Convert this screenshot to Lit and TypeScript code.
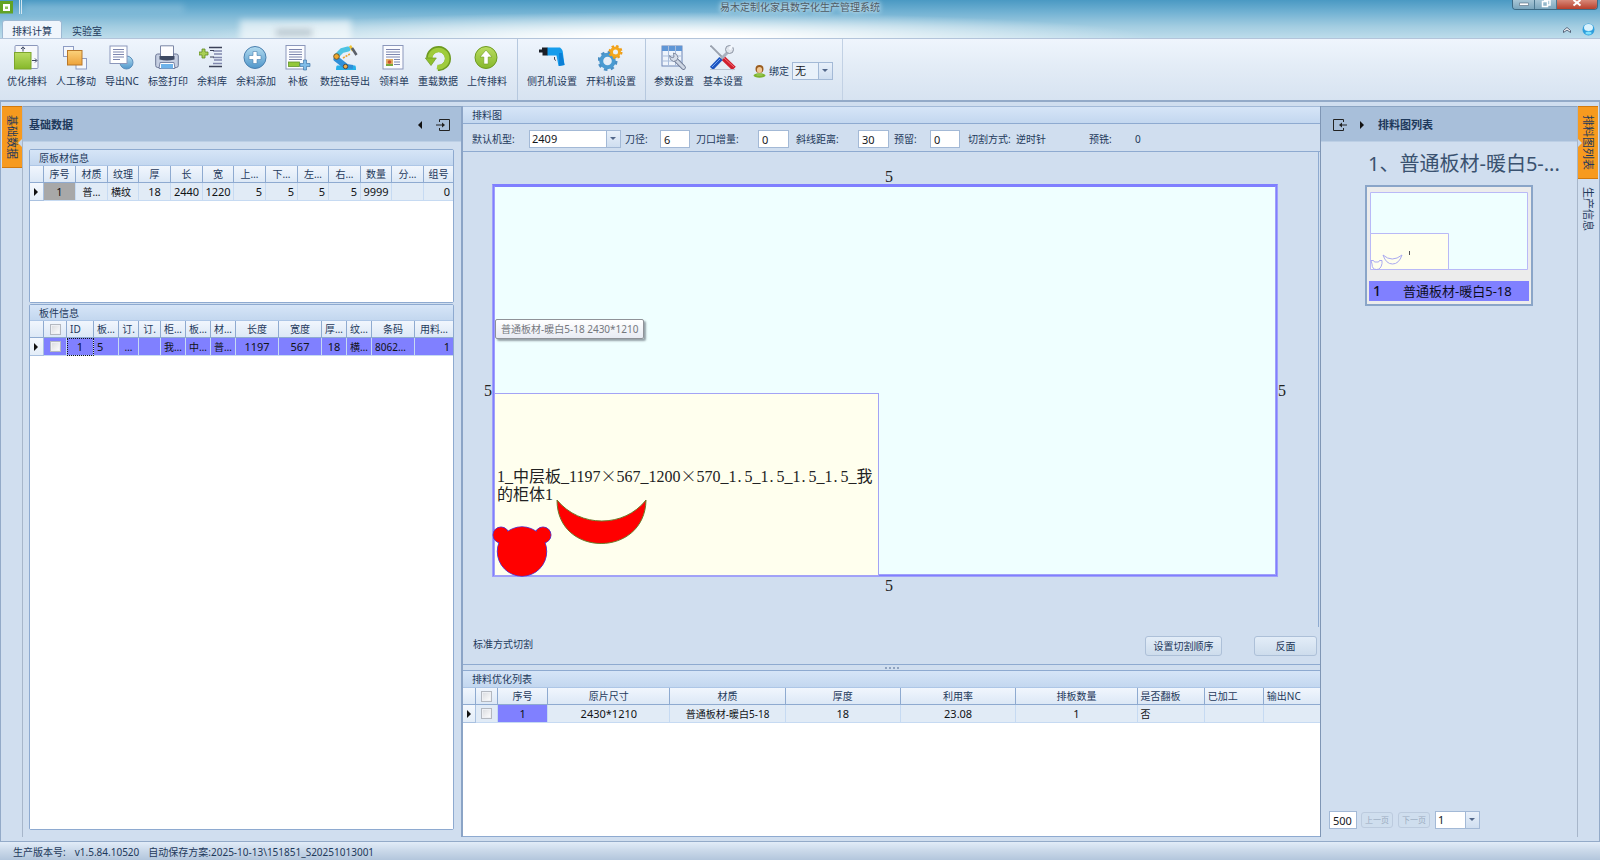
import { LitElement, html, css, svg, nothing } from "lit";
import { customElement, property } from "lit/decorators.js";
import { classMap } from "lit/directives/class-map.js";

const icons: Record<string, unknown> = {
  nest: svg`<rect x="1" y=".5" width="23" height="23" rx="1" fill="#f6f8fc" stroke="#8b97bb"/>
    <rect x=".5" y="7.500" width="16.500" height="16.500" fill="url(#gGreen)" stroke="#7da52c"/>
    <path d="M9 6.500V2.500M7 4L9 1.800 11 4M18 15.500h4.500M21 13.500l2 2-2 2" stroke="#3b4560" fill="none"/>`,
  move: svg`<rect x=".5" y="1.500" width="10" height="10" fill="#f4f7fc" stroke="#8d9cc4"/>
    <rect x="13" y="13.500" width="10.500" height="10.500" fill="#f4f7fc" stroke="#8d9cc4"/>
    <rect x="4.500" y="5.500" width="14.500" height="14.500" fill="url(#gOrange)" stroke="#b8782a"/>`,
  export: svg`<circle cx="17.500" cy="17.500" r="6.500" fill="url(#gBlue)" stroke="#5c8fbc"/>
    <rect x="1" y="1" width="17" height="17.500" fill="#fff" stroke="#8b97bb"/>
    <path d="M4 4.500h11M4 7h11M4 9.500h11M4 12h11M4 14.500h7" stroke="#7d86ae"/>`,
  print: svg`<path d="M5.500 12V.800h13V12z" fill="#fdfdff" stroke="#7b86a6"/>
    <path d="M.700 11q0-2 2-2h2.800v3.500h13V9h2.800q2 0 2 2v9.500q0 2-2 2H2.700q-2 0-2-2z" fill="#c6cfe2" stroke="#6c7796"/>
    <path d="M4.500 11h15v3.500q-7.500 1.800-15 0z" fill="#3f4a63"/>
    <path d="M5 17.500h14l1 6H4z" fill="#fff" stroke="#7b86a6"/><path d="M6 19h12v4.500H6z" fill="#6fb3ea"/>`,
  stock: svg`<path d="M10 2.500h13M10 21.500h13" stroke="#3c4258" stroke-width="1.400"/><path d="M14 6h9M15 9h8M14 12.500h9M15 15h8M14 18.500h9" stroke="#8087ad" stroke-width="1.500"/>
    <path d="M3 4h3v3h3v3H6v3H3v-3H0V7h3z" fill="#a9cf55" stroke="#5f8c22" stroke-width=".8"/>
    <path d="M11 5.500h4M11 12h4" stroke="#3c4258"/>`,
  add: svg`<circle cx="12" cy="12.500" r="11" fill="url(#gBlue)" stroke="#4a7fae"/>
    <path d="M10 6.500h4v4h4v4h-4v4h-4v-4H6v-4h4z" fill="#fff" stroke="#4a7fae" stroke-width=".6"/>`,
  patch: svg`<rect x="1" y=".500" width="19" height="23.500" fill="#fbfcff" stroke="#8b97bb"/>
    <path d="M4 4.500h13M4 7h13M4 9.500h13M4 12h13M4 14.500h13" stroke="#7d86ae"/>
    <rect x="3.500" y="17" width="11" height="4.500" fill="#93c83a" stroke="#5f942a" stroke-width=".8"/>
    <path d="M18.500 15h3v3.500H25v3h-3.500V25h-3v-3.500H15v-3h3.500z" fill="#7fbce8" stroke="#4277a9" stroke-width=".7"/>`,
  robot: svg`<path d="M5 20.500h18q1 0 1 4.500H4q0-4 1-4.500z" fill="#27b0ea"/>
    <path d="M4.500 14L14 21.500" stroke="#2f8fd8" stroke-width="6" stroke-linecap="round"/>
    <path d="M4.500 11L10 5.500 16 4" stroke="#4cc3e2" stroke-width="5" stroke-linecap="round" fill="none"/>
    <path d="M14 21l7 1" stroke="#2f8fd8" stroke-width="4"/>
    <circle cx="4.500" cy="11.500" r="2.800" fill="#f0a72c" stroke="#6e5a33"/><circle cx="13.500" cy="21.500" r="2.200" fill="#f0b046" stroke="#4f4a40"/>
    <path d="M11 13l7-4" stroke="#e9a433" stroke-width="1.600" stroke-dasharray="2 1"/>
    <path d="M17 1.500l2-1.500 3 5-2 1.500z" fill="#f1c232"/><path d="M20 3l4.500 7" stroke="#5b6069" stroke-width="2.600"/>`,
  bill: svg`<rect x="2" y=".500" width="20" height="23.500" fill="#fbfcff" stroke="#8b97bb"/>
    <path d="M5 4.500h14M5 7h14M5 9.500h14M5 12h14M13 14.500h6M13 17h6M13 19.500h6" stroke="#7d86ae"/>
    <rect x="5" y="14" width="7" height="7" fill="#e3ad62"/><circle cx="8.500" cy="17" r="1.800" fill="#c8512c"/><path d="M5 19h7v2H5z" fill="#7aa93c"/>`,
  reload: svg`<path d="M4 13A9.500 9.500 0 1 1 13 23" fill="none" stroke="#6d9a20" stroke-width="6"/>
    <path d="M5 14A8.600 8.600 0 1 1 12 22" fill="none" stroke="#9fcc3c" stroke-width="4.600"/>
    <path d="M.300 13h11L6 20.500z" fill="#8fc02e" stroke="#6d9a20" stroke-width=".7"/>`,
  upload: svg`<circle cx="12" cy="12.500" r="11" fill="url(#gGreen)" stroke="#6d9a20"/>
    <path d="M12 5l6 7h-3.800v7H9.800v-7H6z" fill="#fff" stroke="#6d9a20" stroke-width=".6"/>`,
  drill: svg`<path d="M8 2.500h13q3 2 3 6l1.500 11.500-6 1-2-10.500H8z" fill="#159cec"/><path d="M20 8l3 0 2.500 12-5.500 1z" fill="#0b7fd6"/>
    <path d="M0 4.500h3v-2h5.500v8H3.500v-3H0z" fill="#1b1f27"/><path d="M15.500 12v2.500l1.500 1" stroke="#445" fill="none"/>`,
  gears: svg`<circle cx="9.500" cy="16" r="6.300" fill="none" stroke="#4a9bd2" stroke-width="4"/>
    <circle cx="9.500" cy="16" r="8.800" fill="none" stroke="#4a8fc4" stroke-width="2.400" stroke-dasharray="3.500 3.410"/>
    <circle cx="17.500" cy="7" r="4" fill="none" stroke="#f5a81c" stroke-width="3"/>
    <circle cx="17.500" cy="7" r="6" fill="none" stroke="#ef9d16" stroke-width="2" stroke-dasharray="2.400 2.310"/>`,
  params: svg`<rect x="1" y="1" width="20" height="20" fill="#eef4fc" stroke="#6f86b5"/>
    <path d="M1 1h20v5H1z" fill="#5f96d6"/><path d="M1 11h20M1 16h20M7.500 1v20M14.500 1v20" stroke="#a9bddb"/>
    <path d="M14 14l8.500 8.500" stroke="#6d7891" stroke-width="4.600" stroke-linecap="round"/>
    <path d="M14 14l8.500 8.500" stroke="#cdd6e4" stroke-width="3" stroke-linecap="round"/>
    <path d="M8.500 10.500q0 5 4 6 4 0 4.500-4-.500-4-4.500-4.500l.500 4-2 .800z" fill="#d6deea" stroke="#6d7891" stroke-width=".8"/>`,
  tools: svg`<path d="M.500 .500L13 13" stroke="#9aa1ae" stroke-width="1.800"/><path d="M12 12l12 11.500" stroke="#d01f2d" stroke-width="5"/><path d="M14 13l10 9" stroke="#f2717a" stroke-width="1"/>
    <path d="M19 6L10 15" stroke="#aab2c0" stroke-width="3"/><path d="M11 13.500L1.500 23.500" stroke="#1d55c0" stroke-width="4.600"/><path d="M10 14L2 22" stroke="#6ea0f0" stroke-width="1"/>
    <circle cx="19.500" cy="4.500" r="4" fill="#dfe4ec" stroke="#8b93a2"/><path d="M19.500 4.500l3-4.500" stroke="#f3f7fd" stroke-width="2.500"/><path d="M0 24.500h25" stroke="#b9c4d3"/>`,
};

interface Tool { icon: string; label: string }
const groups: Tool[][] = [
  [
    { icon: "nest", label: "优化排料" }, { icon: "move", label: "人工移动" }, { icon: "export", label: "导出NC" },
    { icon: "print", label: "标签打印" }, { icon: "stock", label: "余料库" }, { icon: "add", label: "余料添加" },
    { icon: "patch", label: "补板" }, { icon: "robot", label: "数控钻导出" }, { icon: "bill", label: "领料单" },
    { icon: "reload", label: "重载数据" }, { icon: "upload", label: "上传排料" },
  ],
  [{ icon: "drill", label: "侧孔机设置" }, { icon: "gears", label: "开料机设置" }],
  [{ icon: "params", label: "参数设置" }, { icon: "tools", label: "基本设置" }],
];

interface Column {
  title: string;
  w: number;
  value?: string;
  align?: "l" | "c" | "r";
  headLeft?: boolean;
  kind?: "mark" | "check" | "grey" | "blue" | "focus";
}

const sheetColumns: Column[] = [
  { title: "", w: 14, kind: "mark" },
  { title: "序号", w: 32, value: "1", kind: "grey" }, { title: "材质", w: 32, value: "普…" },
  { title: "纹理", w: 31, value: "横纹", align: "l" }, { title: "厚", w: 32, value: "18" },
  { title: "长", w: 32, value: "2440" }, { title: "宽", w: 31, value: "1220" },
  { title: "上…", w: 32, value: "5", align: "r" }, { title: "下…", w: 32, value: "5", align: "r" },
  { title: "左…", w: 31, value: "5", align: "r" }, { title: "右…", w: 32, value: "5", align: "r" },
  { title: "数量", w: 31, value: "9999" }, { title: "分…", w: 32, value: "" },
  { title: "组号", w: 29, value: "0", align: "r" },
];
const partColumns: Column[] = [
  { title: "", w: 14, kind: "mark" }, { title: "", w: 23, kind: "check" },
  { title: "ID", w: 27, value: "1", kind: "focus", headLeft: true },
  { title: "板…", w: 25, value: "5", align: "l" }, { title: "订.", w: 20, value: "…" }, { title: "订.", w: 22, value: "" },
  { title: "柜…", w: 25, value: "我…" }, { title: "板…", w: 25, value: "中…" }, { title: "材…", w: 25, value: "普…" },
  { title: "长度", w: 43, value: "1197" }, { title: "宽度", w: 43, value: "567" }, { title: "厚…", w: 25, value: "18" },
  { title: "纹…", w: 25, value: "横…" }, { title: "条码", w: 43, value: "8062…", align: "l" },
  { title: "用料…", w: 38, value: "1", align: "r" },
];
const resultColumns: Column[] = [
  { title: "", w: 13, kind: "mark" }, { title: "", w: 22, kind: "check" },
  { title: "序号", w: 50, value: "1", kind: "blue" }, { title: "原片尺寸", w: 122, value: "2430*1210" },
  { title: "材质", w: 115, value: "普通板材-暖白5-18" }, { title: "厚度", w: 115, value: "18" },
  { title: "利用率", w: 115, value: "23.08" }, { title: "排板数量", w: 121, value: "1" },
  { title: "是否翻板", w: 67, value: "否", align: "l", headLeft: true },
  { title: "已加工", w: 59, value: "", headLeft: true }, { title: "输出NC", w: 56, value: "", headLeft: true },
];

@customElement("data-grid")
export class DataGrid extends LitElement {
  @property({ attribute: false }) columns: Column[] = [];
  @property({ type: Boolean }) selected = false;
  @property() name = "";

  static styles = css`
    :host { display: block; flex: 1; background: #fff; min-height: 0; overflow: hidden; }
    table { width: 100%; table-layout: fixed; border-collapse: separate; border-spacing: 0; font-size: 10px; line-height: 16px; }
    th, td { box-sizing: border-box; height: 18px; padding: 0 3px; overflow: hidden; white-space: nowrap; text-align: center; font-weight: 400; }
    th, td.c { padding: 0 1px; }
    th.l { padding: 0 3px; }
    th { color: #1e395b; height: 17px; background: linear-gradient(#f1f6fd, #dce8f6); border-right: 1px solid #8eaad0; border-bottom: 1px solid #8eaad0; }
    td { color: #101215; background: #e1ebf6; border-right: 1px solid #c6daf2; border-bottom: 1px solid #c6daf2; }
    th:last-child, td:last-child { border-right: 0; }
    .num { font-size: 11px; }
    .l { text-align: left; }
    .r { text-align: right; }
    .mark { background: linear-gradient(#f4f8fd, #e3edf8); border-color: #a9c1e0; }
    .mark svg { display: block; margin: auto; }
    .grey { background: #a8a8a8; }
    .sel td:not(.mark), .blue { background: #8080ff; }
    .focus { outline: 1px dotted #16181c; outline-offset: -1px; }
    input { appearance: none; display: block; box-sizing: border-box; width: 11px; height: 11px; margin: 0 auto; border: 1px solid #b3b8c0; background: linear-gradient(135deg, #d8dade, #fff); outline: 1px solid #eef0f4; outline-offset: -2px; }
  `;

  private check(label: string) {
    return html`<input type="checkbox" aria-label=${label} />`;
  }

  render() {
    const total = this.columns.reduce((sum, c) => sum + c.w, 0);
    return html`<table aria-label=${this.name}>
      <colgroup>${this.columns.map((c) => html`<col style="width:${(c.w / total) * 100}%" />`)}</colgroup>
      <thead><tr>${this.columns.map((c) => html`<th class=${classMap({ l: !!c.headLeft })}>${
        c.kind === "check" ? this.check("全选") : c.title}</th>`)}</tr></thead>
      <tbody><tr class=${this.selected ? "sel" : ""}>${this.columns.map((c) => html`<td class=${classMap({
        [c.align ?? "c"]: true, [c.kind ?? "plain"]: true, num: /^[\d.*]+$/.test(c.value ?? ""),
      })}>${c.kind === "mark"
        ? html`<svg width="5" height="8"><path d="M0 0l4 4-4 4z" fill="#111"/></svg>`
        : c.kind === "check" ? this.check("选择") : c.value ?? nothing}</td>`)}</tr></tbody>
    </table>`;
  }
}

@customElement("app-root")
export class AppRoot extends LitElement {
  static styles = css`
    :host {
      display: grid; grid-template-rows: 38px 63px 1fr 19px; height: 100vh; overflow: hidden;
      font: 10px/14px "Noto Sans", "Noto Sans CJK SC", sans-serif; color: #1e395b; background: #d0deef;
    }
    * { box-sizing: border-box; }
    button, input, select { font: inherit; color: inherit; margin: 0; }
    button { border: 0; background: none; padding: 0; }
    .defs { position: absolute; width: 0; height: 0; }

    .title {
      display: grid; grid-template: 15px 1fr / 1fr auto 1fr; position: relative; overflow: hidden;
      background:
        radial-gradient(ellipse 480px 26px at 42% 100%, #fff 15%, rgba(255, 255, 255, 0) 100%),
        linear-gradient(#4a99c3, #6fb0d2 30%, #a3cde1 70%, #bddceb);
    }
    .ghost { position: absolute; filter: blur(3px); background: rgba(255, 255, 255, .4); }
    .g1 { left: 24px; top: 4px; width: 160px; height: 8px; opacity: .4; }
    .g2 { left: 240px; top: 20px; width: 111px; height: 22px; background: rgba(255, 255, 255, .6); }
    .g3 { left: 276px; top: 29px; width: 36px; height: 7px; background: #b9c7cf; }
    .brand { display: flex; align-items: flex-start; gap: 5px; }
    .brand svg { display: block; }
    .brand i { width: 3px; height: 14px; border: solid #d3e6f0; border-width: 0 1px; }
    h1 { margin: 0; font: inherit; line-height: 14px; color: #4e5a64; text-shadow: 0 0 4px #e8f3f8, 0 0 6px #e8f3f8; }
    .win { display: flex; justify-self: end; height: 10px; margin-right: 2px; border: 1px solid #3e6a84; border-top: 0; border-radius: 0 0 4px 4px; overflow: hidden; }
    .win button { width: 22px; display: grid; place-items: center; background: linear-gradient(#a8c6d6, #7ba6bd); border-right: 1px solid #4c7890; }
    .win .close { width: 40px; background: linear-gradient(#d88878, #b8402c); border-right: 0; }
    .tabs { grid-column: 1 / 3; display: flex; align-items: flex-end; padding-left: 2px; }
    .tabs button { height: 18px; padding: 3px 10px 0; }
    .tabs .on { padding: 2px 9px 0; border-radius: 3px 3px 0 0; border: 1px solid #9db9d3; border-bottom: 0; background: #f0f5fc; }
    .corner { display: flex; align-items: center; justify-content: flex-end; gap: 10px; padding: 6px 5px 0 0; }
    .corner button, .corner svg { display: block; }

    .ribbon { display: flex; border-top: 1px solid #b3c4da; border-bottom: 1px solid #93aac8; background: linear-gradient(#eff5fd, #e3ecf6 45%, #d7e3f1); }
    .tools { display: flex; align-items: flex-start; gap: 9px; padding: 6px 9px 0; border-right: 1px solid #b6c8de; }
    .tools.first { padding: 6px 10px 0 7px; }
    .tools.end { border: 0; padding: 6px 0 0 8px; }
    .tool { display: flex; flex-direction: column; align-items: center; gap: 3px; min-width: 26px; height: 50px; white-space: nowrap; }
    .tool svg { width: 26px; height: 26px; display: block; }
    .bind { display: flex; align-items: center; gap: 3px; padding: 2px 9px 0 10px; border-right: 1px solid #c2d1e4; }

    .combo { position: relative; display: block; height: 18px; }
    .combo select { appearance: none; width: 100%; height: 100%; padding: 0 2px; border: 1px solid #a3b9d6; border-radius: 0; background: #fff; color: #16181c; font-size: 11px; }
    .combo::before { content: ""; position: absolute; right: 1px; top: 1px; bottom: 1px; width: 13px; border-left: 1px solid #a3b9d6; background: linear-gradient(#e8f0fa, #cfdef0); pointer-events: none; }
    .combo::after { content: ""; position: absolute; right: 5px; top: 7px; border: 3px solid transparent; border-top-color: #52678a; border-bottom: 0; pointer-events: none; }
    .w41 { width: 41px; } .w45 { width: 45px; }
    .bind select { background: #e9f1fa; }
    .text { height: 18px; min-width: 0; padding: 0 3px; border: 1px solid #a3b9d6; background: #fff; color: #16181c; font-size: 11px; }

    .work { display: grid; grid-template-columns: 22px 438px 1fr 256px 22px; border: 1px solid #93aac8; border-width: 1px 1px 0; min-height: 0; padding-top: 4px; }
    .rail { padding-left: 1px; min-width: 0; border-right: 1px solid #a7b6ca; margin-bottom: 4px; }
    .rail.right { border: 0; border-left: 1px solid #a7b6ca; padding: 0 1px 0 0; }
    .rail button { display: flex; align-items: center; justify-content: flex-start; writing-mode: vertical-rl; text-orientation: sideways; width: 20px; padding: 8px 0; font-size: 11px; line-height: 20px; }
    .rail .on { position: relative; background: #f79a1e; border: solid #d2790c; border-width: 1px 0; }
    .rail .on::after { content: ""; position: absolute; top: 32px; right: 0; border: 4px solid transparent; border-right-color: #c5d6ea; border-left: 0; }
    .rail.right .on::after { right: auto; left: 0; border: 4px solid transparent; border-left-color: #c5d6ea; border-right: 0; }

    .panel { display: flex; flex-direction: column; min-width: 0; min-height: 0; }
    .phead { display: flex; align-items: center; gap: 13px; height: 36px; padding: 1px 11px 0 6px; background: #a8bfda; border-bottom: 1px solid #bccfe5; border-top: 1px solid #8ba4c2; }
    .phead h2 { margin: 0; font-size: 11px; font-weight: 700; line-height: 16px; }
    .phead .grow { flex: 1; }
    .phead svg { display: block; }
    .boxes { flex: 1; display: flex; flex-direction: column; gap: 1px; padding: 7px 7px 11px 6px; min-height: 0; }
    .box { display: flex; flex-direction: column; border: 1px solid #8eaad0; border-radius: 2px; min-height: 0; }
    .b1 { flex: 153 0 0; } .b2 { flex: 527 0 0; }
    .cap { margin: 0; height: 17px; padding-left: 9px; font: inherit; line-height: 17px; background: linear-gradient(#d6e5f7, #c3d7ef); border-bottom: 1px solid #adc6e6; }
    .box .cap { height: 16px; }

    .center { border-left: 2px solid #8ba4c6; border-right: 1px solid #7f96b5; margin-bottom: 4px; }
    .center > .cap { height: 18px; border-top: 1px solid #a3bad8; border-bottom-color: #8eaad0; }
    .params { display: grid; grid-template-columns: 57px 92px 4px 35px 30px 6px 62px 31px 7px 62px 31px 5px 36px 30px 8px 48px 73px 46px 20px; align-items: center; height: 28px; padding: 3px 0 0 9px; border-bottom: 1px solid #8eaad0; }
    .params label { white-space: nowrap; }
    .sheet { flex: 1; display: grid; grid-template: 16px 1fr 16px / 29px 1fr 40px; padding: 16px 0 34px; margin-right: 1px; border-right: 1px solid #8eaad0; min-height: 0; font: 16px/16px "Liberation Serif", "Noto Sans CJK SC", serif; color: #222; }
    .dim { place-self: center; }
    .n { grid-area: 1 / 2; padding: 2px 0 0 8px; line-height: 14px; } .s { grid-area: 3 / 2; padding: 2px 0 0 8px; }
    .w { grid-area: 2 / 1; justify-self: end; padding-top: 20px; } .e { grid-area: 2 / 3; justify-self: start; padding-top: 20px; }
    .board { grid-area: 2 / 2; position: relative; background: #efffff; border: 3px solid #a0a0fa; border-top: 3px double #7f7fff; outline: 1px solid #7f7fff; outline-offset: -2px; }
    .part { position: absolute; left: -1px; bottom: -2px; width: 49.3%; height: 47.4%; background: #ffffee; border: 1px solid #a3a3f5; }
    .part p { position: absolute; top: 40%; left: 2px; margin: 0; font-size: 16px; line-height: 18px; white-space: nowrap; }
    .pt { display: inline-block; width: 8px; padding-left: 1px; }
    .x { font-family: "Noto Sans CJK SC"; font-weight: 300; display: inline-block; width: 16px; text-align: center; }
    .cuts { position: absolute; left: -3px; bottom: -2px; width: 156px; height: 80px; overflow: visible; }
    .tip { position: absolute; left: 0; top: 34%; padding: 1px 5px; border: 1px solid #8f9298; border-radius: 2px; background: linear-gradient(#fff, #e8ebf3); box-shadow: 2px 2px 2px rgba(90, 100, 110, .6); color: #75787e; font: 10px/16px "Noto Sans", "Noto Sans CJK SC", sans-serif; }
    .actions { display: flex; align-items: center; height: 38px; padding: 1px 3px 0 10px; border-bottom: 1px solid #8eaad0; }
    .actions span { flex: 1; padding-bottom: 5px; }
    .btn { height: 20px; border: 1px solid #adc0d8; border-radius: 3px; background: linear-gradient(#e3edf8, #cddcec); }
    .b77 { width: 77px; margin-right: 32px; } .b63 { width: 63px; }
    .grip { display: flex; gap: 2px; justify-content: center; align-items: center; height: 5px; }
    .grip i { width: 2px; height: 2px; background: #8fa3c0; }
    .results { height: 167px; display: flex; flex-direction: column; border-top: 1px solid #8eaad0; border-bottom: 1px solid #8eaad0; }

    .side .phead { padding-left: 12px; }
    .body { flex: 1; display: flex; flex-direction: column; align-items: flex-start; padding: 6px 0 12px 8px; }
    .body h3 { margin: 0 0 5px 39px; font-size: 20px; line-height: 32px; font-weight: 400; color: #3a5270; white-space: nowrap; }
    .card { width: 168px; margin-left: 36px; padding: 4px 2px 3px; border: 2px solid #8aa5c8; background: #ececec; display: grid; gap: 10px; }
    .card svg { display: block; width: 160px; height: 80px; }
    .card div { display: flex; gap: 22px; padding: 0 4px; background: #8080ff; color: #0d0d1d; font-size: 13px; line-height: 20px; white-space: nowrap; }
    .card b { font-weight: 500; font-size: 14px; }
    .pager { display: flex; align-items: center; margin-top: auto; gap: 4px; }
    .pager .btn { width: 32px; height: 16px; font-size: 8px; line-height: 12px; color: #9aabbf; border-color: #bccbde; background: #cfdeee; margin-right: 1px; }
    .pager .text { width: 28px; }

    .status { display: flex; gap: 9px; align-items: center; padding: 2px 0 0 13px; border-top: 1px solid #93aac8; background: linear-gradient(#e2ecf8, #c9d8e9 50%, #b3c6dc); white-space: nowrap; }
  `;

  private field(id: string, label: string, value: string) {
    return html`<label for=${id}>${label}</label><input class="text" id=${id} .value=${value} />`;
  }

  private tool(t: Tool) {
    return html`<button class="tool"><svg viewBox="0 0 26 26">${icons[t.icon]}</svg>${t.label}</button>`;
  }

  render() {
    const pt = html`<span class="pt">.</span>`;
    const x = html`<span class="x">×</span>`;
    const edge = html`1${pt}5_`;
    return html`
      <header class="title">
        <div class="ghost g1"></div><div class="ghost g2"></div><div class="ghost g3"></div>
        <div class="brand"><svg width="14" height="14"><path d="M0 1h13v12.500H0z" fill="#62a324"/><path d="M3 4h7v7H3z" fill="#fff"/><path d="M5 6.500h3v2.500H5z" fill="#8fc45c"/></svg><i></i></div>
        <h1>易木定制化家具数字化生产管理系统</h1>
        <div class="win">
          <button aria-label="最小化"><svg width="10" height="9"><path d="M.500 3h9v2.500h-9z" fill="#fff" stroke="#50677a" stroke-width=".6"/></svg></button>
          <button aria-label="还原"><svg width="10" height="9"><path d="M3 0h6v5H7M1.500 1.500h5v5h-5z" fill="none" stroke="#fff" stroke-width="1.500"/></svg></button>
          <button class="close" aria-label="关闭"><svg width="10" height="9"><path d="M1.500 0l7 5.500M8.500 0l-7 5.500" stroke="#fff" stroke-width="2"/></svg></button>
        </div>
        <nav class="tabs"><button class="on">排料计算</button><button>实验室</button></nav>
        <div class="corner">
          <button aria-label="折叠功能区"><svg width="10" height="8"><path d="M1.500 4.500L5 1.500l3.500 3v2L5 4 1.500 6.500z" fill="#fff" stroke="#46536b" stroke-width=".9"/></svg></button>
          <button aria-label="帮助"><svg width="13" height="13"><circle cx="6.500" cy="6.500" r="6" fill="#2f9fdd"/><ellipse cx="6.500" cy="4.500" rx="4.500" ry="3.500" fill="#d9f2fd"/><ellipse cx="6.500" cy="10" rx="3" ry="1.500" fill="#7fe0fb"/></svg></button>
        </div>
      </header>

      <section class="ribbon">
        <svg class="defs"><defs>
          <linearGradient id="gGreen" x2="0" y2="1"><stop stop-color="#b9dc62"/><stop offset="1" stop-color="#86b82a"/></linearGradient>
          <linearGradient id="gOrange" x2="0" y2="1"><stop stop-color="#fbd27c"/><stop offset="1" stop-color="#eda23a"/></linearGradient>
          <linearGradient id="gBlue" x2="0" y2="1"><stop stop-color="#b4dcf0"/><stop offset="1" stop-color="#4f96ca"/></linearGradient>
        </defs></svg>
        ${groups.map((g, i) => html`<div class=${classMap({ tools: true, first: i === 0, end: i === 2 })}>${g.map((t) => this.tool(t))}</div>`)}
        <div class="bind">
          <svg width="13" height="14"><ellipse cx="6.500" cy="11.500" rx="6" ry="2.200" fill="#7cb32c"/><path d="M3.500 9.500h6v2.500h-6z" fill="#93c24a"/><circle cx="6.500" cy="5" r="4" fill="#9a5b1d"/><ellipse cx="6.500" cy="6" rx="2.600" ry="3" fill="#f0c795"/></svg>
          <label for="bind">绑定</label>
          <span class="combo w41"><select id="bind"><option>无</option></select></span>
        </div>
      </section>

      <main class="work">
        <nav class="rail"><button class="on">基础数据</button></nav>
        <section class="panel">
          <div class="phead"><h2>基础数据</h2><span class="grow"></span>
            <button aria-label="收起"><svg width="5" height="8"><path d="M4 0L0 4l4 4z" fill="#111"/></svg></button>
            <button aria-label="固定"><svg width="14" height="12"><path d="M3.500 3V.500h10v11h-10V9M0 6h8" fill="none" stroke="#222"/><path d="M6 3.500L9 6 6 8.500z" fill="#222"/></svg></button>
          </div>
          <div class="boxes">
            <div class="box b1"><h3 class="cap">原板材信息</h3><data-grid name="原板材信息" .columns=${sheetColumns}></data-grid></div>
            <div class="box b2"><h3 class="cap">板件信息</h3><data-grid name="板件信息" selected .columns=${partColumns}></data-grid></div>
          </div>
        </section>

        <section class="panel center">
          <h3 class="cap">排料图</h3>
          <form class="params">
            <label for="model">默认机型:</label>
            <span class="combo"><select id="model"><option>2409</option></select></span><i></i>
            ${this.field("dia", "刀径:", "6")}<i></i>
            ${this.field("inc", "刀口增量:", "0")}<i></i>
            ${this.field("slope", "斜线距离:", "30")}<i></i>
            ${this.field("reserve", "预留:", "0")}<i></i>
            <span>切割方式:</span><span>逆时针</span><span>预铣:</span><span>0</span>
          </form>
          <div class="sheet">
            <span class="dim n">5</span><span class="dim w">5</span>
            <div class="board">
              <div class="part">
                <svg class="cuts" viewBox="0 0 156 80">
                  <g fill="#f00" stroke="#5a35c8" stroke-width="1">
                    <circle cx="9" cy="38" r="8"/><circle cx="51" cy="38" r="8"/><circle cx="30" cy="54.500" r="24.700"/>
                  </g>
                  <g fill="#f00"><circle cx="9" cy="38" r="7.500"/><circle cx="51" cy="38" r="7.500"/><circle cx="30" cy="54.500" r="24.200"/></g>
                  <path d="M65 3C65 61 153 61 154 3C132 31 88 31 65 3z" fill="#f00" stroke="#6b7a2a"/>
                </svg>
                <p>1_中层板_1197${x}567_1200${x}570_${edge}${edge}${edge}${edge}我<br />的柜体1</p>
              </div>
              <div class="tip" role="tooltip">普通板材-暖白5-18 2430*1210</div>
            </div>
            <span class="dim e">5</span><span class="dim s">5</span>
          </div>
          <div class="actions"><span>标准方式切割</span><button class="btn b77">设置切割顺序</button><button class="btn b63">反面</button></div>
          <div class="grip"><i></i><i></i><i></i><i></i></div>
          <div class="results"><h3 class="cap">排料优化列表</h3><data-grid name="排料优化列表" .columns=${resultColumns}></data-grid></div>
        </section>

        <section class="panel side">
          <div class="phead">
            <button aria-label="固定"><svg width="14" height="12"><path d="M10.500 3V.500H.500v11h10V9M14 6H7" fill="none" stroke="#222"/><path d="M9 3.500L6 6l3 2.500z" fill="#222"/></svg></button>
            <button aria-label="收起"><svg width="5" height="8"><path d="M0 0l4 4-4 4z" fill="#111"/></svg></button>
            <h2>排料图列表</h2>
          </div>
          <div class="body">
            <h3>1、普通板材-暖白5-...</h3>
            <div class="card">
              <svg viewBox="0 0 160 80"><path d="M1.500 1.500h157v77h-157z" fill="#efffff" stroke="#b9b9f7"/><path d="M1.500 42.500h78v36h-78z" fill="#ffffee" stroke="#b9b9f7"/>
                <path d="M14 64q9 8 19 0q-3 9-9.500 9T14 64zM2 69.500h2.500l1 1.500h4l1-1.500H13v3q-1 6-5.500 6T3 73z" fill="none" stroke="#a9a9f0"/><path d="M40.500 60v4" stroke="#555"/></svg>
              <div><b>1</b><span>普通板材-暖白5-18</span></div>
            </div>
            <div class="pager">
              <input class="text" aria-label="每页数量" .value=${"500"} />
              <button class="btn" disabled>上一页</button><button class="btn" disabled>下一页</button>
              <span class="combo w45"><select aria-label="页码"><option>1</option></select></span>
            </div>
          </div>
        </section>
        <nav class="rail right"><button class="on">排料图列表</button><button>生产信息</button></nav>
      </main>

      <footer class="status"><span>生产版本号:</span><span>v1.5.84.10520</span><span>自动保存方案:2025-10-13\\151851_S20251013001</span></footer>
    `;
  }
}
